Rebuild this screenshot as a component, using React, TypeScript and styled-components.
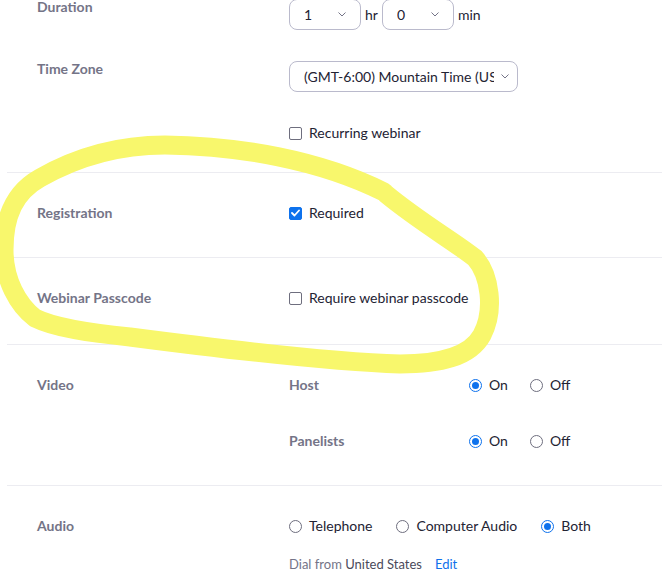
import React from 'react';
import styled, { createGlobalStyle } from 'styled-components';

const GlobalStyle = createGlobalStyle`
  body {
    margin: 0;
    background: #ffffff;
    font-family: Lato, "Noto Sans", sans-serif;
    overflow: hidden;
  }
`;

const Page = styled.div`
  position: relative;
  width: 662px;
  height: 587px;
  overflow: hidden;
  padding-left: 7px;
  box-sizing: border-box;
  font-size: 14px;
  color: #232333;
`;

const Section = styled.div<{ $top?: number; $bottom?: number; $gap?: number }>`
  display: flex;
  flex-direction: column;
  gap: ${(p) => p.$gap ?? 0}px;
  padding: ${(p) => p.$top ?? 30}px 0 ${(p) => p.$bottom ?? 35}px 30px;
  border-bottom: 1px solid #ececf1;
`;

const FirstSection = styled(Section)`
  margin-top: -1px;
`;

const Row = styled.div`
  display: grid;
  grid-template-columns: 252px 1fr;
  align-items: start;
`;

const Label = styled.div<{ $compact?: boolean }>`
  font-weight: 700;
  color: #747487;
  line-height: ${(p) => (p.$compact ? 16 : 20)}px;
`;

const Controls = styled.div<{ $gap: number }>`
  display: flex;
  flex-direction: column;
  gap: ${(p) => p.$gap}px;
`;

const Inline = styled.div<{ $gap?: number }>`
  display: flex;
  align-items: center;
  gap: ${(p) => p.$gap ?? 4}px;
  line-height: 20px;
`;

const Select = styled.div<{ $width: number; $right: number }>`
  display: flex;
  align-items: center;
  width: ${(p) => p.$width}px;
  height: 31px;
  box-sizing: border-box;
  padding: 0 ${(p) => p.$right}px 0 14px;
  border: 1px solid #babacc;
  border-radius: 8px;
  background: #fff;
`;

const SelectValue = styled.span`
  flex: 1;
  min-width: 0;
  overflow: hidden;
  white-space: nowrap;
  margin-right: 7px;
`;

const Unit = styled.span`
  color: #232333;
`;

const SubRow = styled.div`
  display: grid;
  grid-template-columns: 180px auto;
  align-items: center;
  line-height: 20px;
`;

const SubLabel = styled.span`
  font-weight: 700;
  color: #747487;
`;

const Option = styled.label<{ $space?: number }>`
  display: inline-flex;
  align-items: center;
  gap: 7px;
  margin-right: ${(p) => p.$space ?? 22}px;
  line-height: 20px;
  color: #232333;
`;

const Box = styled.span<{ $checked?: boolean }>`
  display: inline-flex;
  align-items: center;
  justify-content: center;
  width: 13px;
  height: 13px;
  box-sizing: border-box;
  border-radius: 2px;
  border: 1px solid ${(p) => (p.$checked ? '#0e72ed' : '#6e6e7e')};
  background: ${(p) => (p.$checked ? '#0e72ed' : '#fff')};
`;

const Radio = styled.span<{ $checked?: boolean }>`
  display: inline-flex;
  align-items: center;
  justify-content: center;
  width: 13px;
  height: 13px;
  box-sizing: border-box;
  border-radius: 50%;
  border: 1px solid ${(p) => (p.$checked ? '#0e72ed' : '#6e6e7e')};
  background: #fff;

  &::after {
    content: '';
    display: ${(p) => (p.$checked ? 'block' : 'none')};
    width: 7px;
    height: 7px;
    border-radius: 50%;
    background: #0e72ed;
  }
`;

const Dial = styled.div`
  line-height: 20px;
  font-size: 13px;
  color: #747487;
`;

const Country = styled.span`
  color: #4a4a5a;
`;

const EditLink = styled.a`
  color: #0e71eb;
  margin-left: 13px;
  text-decoration: none;
`;

const Marker = styled.svg`
  position: absolute;
  top: 0;
  left: 0;
  pointer-events: none;
`;

const Chevron = () => (
  <svg width="8" height="5" viewBox="0 0 8 5">
    <polyline points="0.5,0.5 4,4 7.5,0.5" fill="none" stroke="#747487" strokeWidth="1" />
  </svg>
);

const Check = () => (
  <svg width="9" height="8" viewBox="0 0 9 8">
    <polyline points="1,4 3.5,6.5 8,1.5" fill="none" stroke="#fff" strokeWidth="1.8" strokeLinecap="round" strokeLinejoin="round" />
  </svg>
);

const App = () => {
  return (
    <>
      <GlobalStyle />
      <Page>
        <FirstSection $top={0} $bottom={29} $gap={31}>
          <Row>
            <Label $compact>Duration</Label>
            <Inline>
              <Select $width={72} $right={14}>
                <SelectValue>1</SelectValue>
                <Chevron />
              </Select>
              <Unit>hr</Unit>
              <Select $width={72} $right={14}>
                <SelectValue>0</SelectValue>
                <Chevron />
              </Select>
              <Unit>min</Unit>
            </Inline>
          </Row>
          <Row>
            <Label $compact>Time Zone</Label>
            <Inline>
              <Select $width={229} $right={8}>
                <SelectValue>(GMT-6:00) Mountain Time (US and Canada)</SelectValue>
                <Chevron />
              </Select>
            </Inline>
          </Row>
          <Row>
            <Label />
            <Inline>
              <Option>
                <Box />
                Recurring webinar
              </Option>
            </Inline>
          </Row>
        </FirstSection>

        <Section $bottom={34}>
          <Row>
            <Label>Registration</Label>
            <Inline>
              <Option>
                <Box $checked>
                  <Check />
                </Box>
                Required
              </Option>
            </Inline>
          </Row>
        </Section>

        <Section $bottom={36}>
          <Row>
            <Label>Webinar Passcode</Label>
            <Inline>
              <Option>
                <Box />
                Require webinar passcode
              </Option>
            </Inline>
          </Row>
        </Section>

        <Section $bottom={34}>
          <Row>
            <Label>Video</Label>
            <Controls $gap={36}>
              <SubRow>
                <SubLabel>Host</SubLabel>
                <Inline $gap={0}>
                  <Option>
                    <Radio $checked />
                    On
                  </Option>
                  <Option>
                    <Radio />
                    Off
                  </Option>
                </Inline>
              </SubRow>
              <SubRow>
                <SubLabel>Panelists</SubLabel>
                <Inline $gap={0}>
                  <Option>
                    <Radio $checked />
                    On
                  </Option>
                  <Option>
                    <Radio />
                    Off
                  </Option>
                </Inline>
              </SubRow>
            </Controls>
          </Row>
        </Section>

        <Section $bottom={40}>
          <Row>
            <Label>Audio</Label>
            <Controls $gap={18}>
              <Inline $gap={0}>
                <Option $space={24}>
                  <Radio />
                  Telephone
                </Option>
                <Option $space={24}>
                  <Radio />
                  Computer Audio
                </Option>
                <Option>
                  <Radio $checked />
                  Both
                </Option>
              </Inline>
              <Dial>
                Dial from <Country>United States</Country>
                <EditLink href="#">Edit</EditLink>
              </Dial>
            </Controls>
          </Row>
        </Section>

        <Marker width="662" height="587" viewBox="0 0 662 587">
          <path
            d="M 386 194 C 420 222, 452 240, 475 258 C 490 275, 495 310, 482 335 C 470 357, 440 364, 400 364 C 330 362, 230 350, 130 337 C 90 333, 55 328, 35 318 C 18 305, 4 280, 4 250 C 4 215, 15 192, 40 178 C 75 158, 115 145, 165 145 C 240 146, 320 160, 384 192"
            fill="none"
            stroke="#f8f76c"
            strokeWidth="19"
            strokeLinecap="round"
            strokeLinejoin="round"
          />
        </Marker>
      </Page>
    </>
  );
};

export default App;
